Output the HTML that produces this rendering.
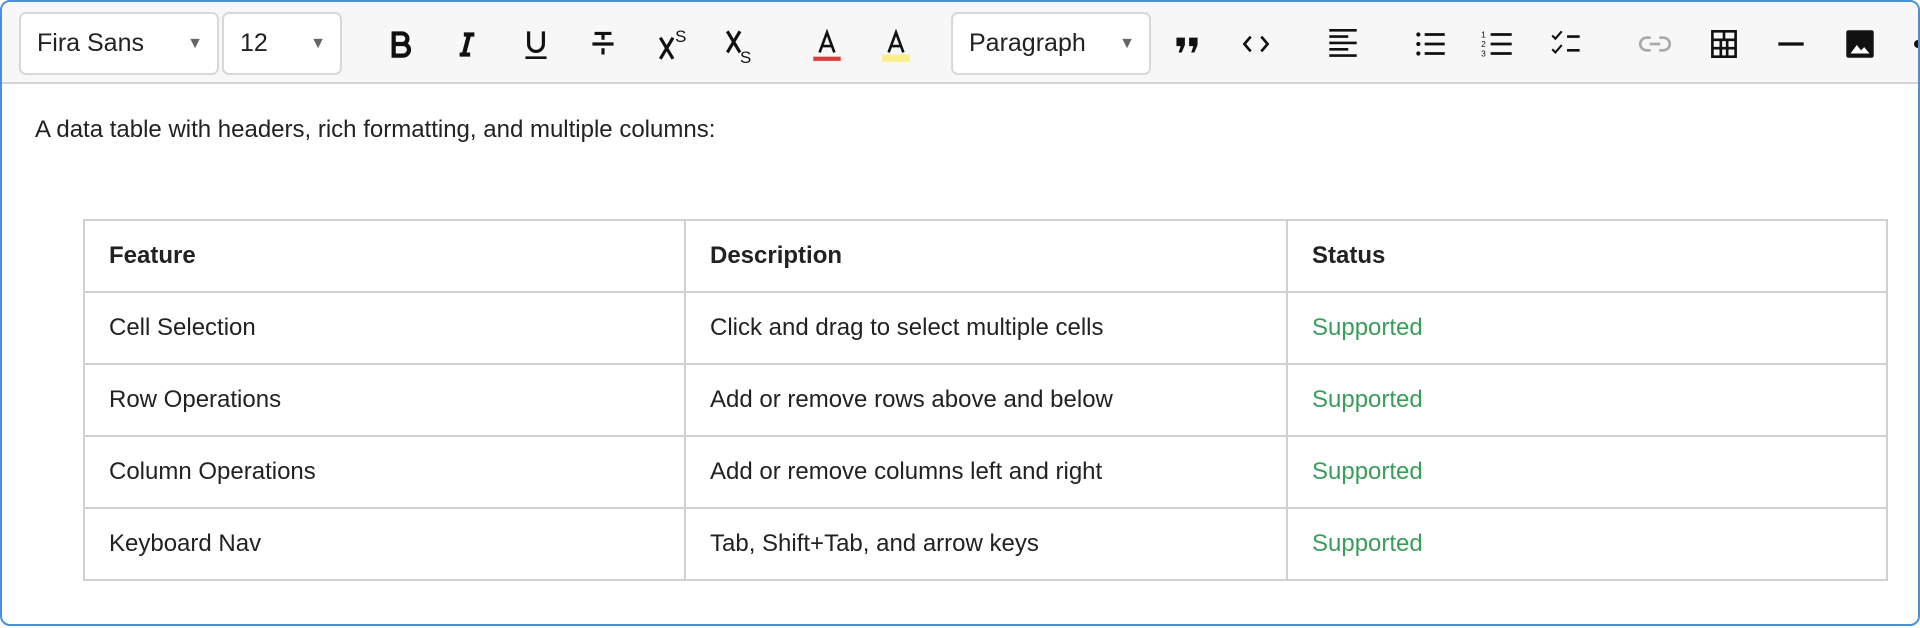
<!DOCTYPE html>
<html><head><meta charset="utf-8"><style>
*{box-sizing:border-box;margin:0;padding:0}
body{width:1920px;height:628px;background:#fff;font-family:"Liberation Sans",Arial,sans-serif;color:#222;overflow:hidden}
.ed{position:absolute;left:0;top:0;width:1920px;height:626px;border:2px solid #4a90d9;border-radius:10px;overflow:hidden}
.tb{position:absolute;left:0;top:0;width:1916px;height:82px;background:#f7f7f7;border-bottom:2px solid #d4d4d4}
.sel{position:absolute;top:10px;height:63px;background:#fff;border:2px solid #d8d8d8;border-radius:7px;font-size:25px;line-height:59px;padding-left:16px;color:#222}
.sel .ar{position:absolute;right:14px;top:0;font-size:16px;color:#666}
.ic{position:absolute;top:23px;width:38px;height:38px;margin-left:-19px}
.txt{position:absolute;left:33px;top:114px;font-size:24px}
table{position:absolute;left:81px;top:217px;width:1805px;border-collapse:collapse;font-size:24px}
td,th{border:2px solid #d0d0d0;height:72px;padding:0 24px;text-align:left;vertical-align:middle}
th{font-weight:bold}
td.g{color:#3a9d5a}
</style></head><body>
<div class="ed">
<div class="tb">
<div class="sel" style="left:17px;width:200px">Fira Sans<span class="ar">▼</span></div>
<div class="sel" style="left:220px;width:120px">12<span class="ar">▼</span></div>
<div class="sel" style="left:949px;width:200px">Paragraph<span class="ar">▼</span></div>

<svg class="ic" style="left:398px" viewBox="0 0 36 36"><path d="M12 8h8a5 5 0 0 1 0 10h-8zM12 18h9a5.5 5.5 0 0 1 0 11h-9z" fill="none" stroke="#111" stroke-width="4"/></svg>
<svg class="ic" style="left:465px" viewBox="0 0 36 36"><path d="M15 9h10M11 28h10M20 9l-5 19" fill="none" stroke="#111" stroke-width="4"/></svg>
<svg class="ic" style="left:534px" viewBox="0 0 36 36"><path d="M11 6v12a7 7 0 0 0 14 0V6" fill="none" stroke="#111" stroke-width="3"/><path d="M8 31h20" stroke="#111" stroke-width="2.5"/></svg>
<svg class="ic" style="left:601px" viewBox="0 0 36 36"><path d="M8 18h20M10 8h16M18 8v6M18 22v6" stroke="#111" stroke-width="3"/></svg>
<svg class="ic" style="left:671px" viewBox="0 0 36 36"><path d="M6 12l12 20M18 12L6 32" stroke="#111" stroke-width="3"/><text x="20" y="16" font-size="16" font-family="Liberation Sans" fill="#111">S</text></svg>
<svg class="ic" style="left:738px" viewBox="0 0 36 36"><path d="M6 6l12 20M18 6L6 26" stroke="#111" stroke-width="3"/><text x="18" y="36" font-size="16" font-family="Liberation Sans" fill="#111">S</text></svg>
<svg class="ic" style="left:825px" viewBox="0 0 36 36"><path d="M11 26l7-19 7 19M13.5 20h9" fill="none" stroke="#111" stroke-width="2.5"/><rect x="5" y="30" width="26" height="4" fill="#e03b3b"/></svg>
<svg class="ic" style="left:894px" viewBox="0 0 36 36"><rect x="5" y="28" width="26" height="7" fill="#fbef8c"/><path d="M11 26l7-19 7 19M13.5 20h9" fill="none" stroke="#111" stroke-width="2.5"/></svg>

<svg class="ic" style="left:1185px" viewBox="0 0 36 36"><path d="M8 12h8v7l-3 7h-3l2-6h-4zM20 12h8v7l-3 7h-3l2-6h-4z" fill="#111"/></svg>
<svg class="ic" style="left:1254px" viewBox="0 0 36 36"><path d="M13 11l-6 7 6 7M23 11l6 7-6 7" fill="none" stroke="#111" stroke-width="2.5"/></svg>
<svg class="ic" style="left:1341px" viewBox="0 0 36 36"><path d="M5 5h26M5 11h18M5 17h26M5 23h18M5 29h26" stroke="#111" stroke-width="2.5"/></svg>
<svg class="ic" style="left:1429px" viewBox="0 0 36 36"><circle cx="6" cy="9" r="2" fill="#111"/><circle cx="6" cy="18" r="2" fill="#111"/><circle cx="6" cy="27" r="2" fill="#111"/><path d="M12 9h19M12 18h19M12 27h19" stroke="#111" stroke-width="2.5"/></svg>
<svg class="ic" style="left:1496px" viewBox="0 0 36 36"><text x="2" y="12" font-size="8" fill="#111" font-family="Liberation Sans">1</text><text x="2" y="21" font-size="8" fill="#111" font-family="Liberation Sans">2</text><text x="2" y="30" font-size="8" fill="#111" font-family="Liberation Sans">3</text><path d="M11 9h20M11 18h20M11 27h20" stroke="#111" stroke-width="2.5"/></svg>
<svg class="ic" style="left:1565px" viewBox="0 0 36 36"><path d="M4 10l3 3 6-7M4 23l3 3 6-7" fill="none" stroke="#111" stroke-width="2"/><path d="M18 11h12M18 24h12" stroke="#111" stroke-width="2.5"/></svg>
<svg class="ic" style="left:1653px" viewBox="0 0 36 36"><path d="M14 12h-4a6 6 0 0 0 0 12h4M22 12h4a6 6 0 0 1 0 12h-4M13 18h10" fill="none" stroke="#aaa" stroke-width="2.5"/></svg>
<svg class="ic" style="left:1722px" viewBox="0 0 36 36"><path d="M7 6h22v24H7zM7 14h22M7 22h22M15 14v16M21 14v16M18 6v8" fill="none" stroke="#111" stroke-width="2.5"/></svg>
<svg class="ic" style="left:1789px" viewBox="0 0 36 36"><path d="M6 18h24" stroke="#111" stroke-width="3"/></svg>
<svg class="ic" style="left:1858px" viewBox="0 0 36 36"><rect x="5" y="5" width="26" height="26" rx="2" fill="#111"/><path d="M9 27l6-8 4 5 3-3 5 6z" fill="#fff"/></svg>
<div style="position:absolute;left:1912px;top:38px;width:8px;height:8px;border-radius:4px;background:#111"></div>
</div>
<div class="txt">A data table with headers, rich formatting, and multiple columns:</div>
<table>
<colgroup><col style="width:601px"><col style="width:602px"><col></colgroup>
<tr><th>Feature</th><th>Description</th><th>Status</th></tr>
<tr><td>Cell Selection</td><td>Click and drag to select multiple cells</td><td class="g">Supported</td></tr>
<tr><td>Row Operations</td><td>Add or remove rows above and below</td><td class="g">Supported</td></tr>
<tr><td>Column Operations</td><td>Add or remove columns left and right</td><td class="g">Supported</td></tr>
<tr><td>Keyboard Nav</td><td>Tab, Shift+Tab, and arrow keys</td><td class="g">Supported</td></tr>
</table>
</div>
</body></html>
